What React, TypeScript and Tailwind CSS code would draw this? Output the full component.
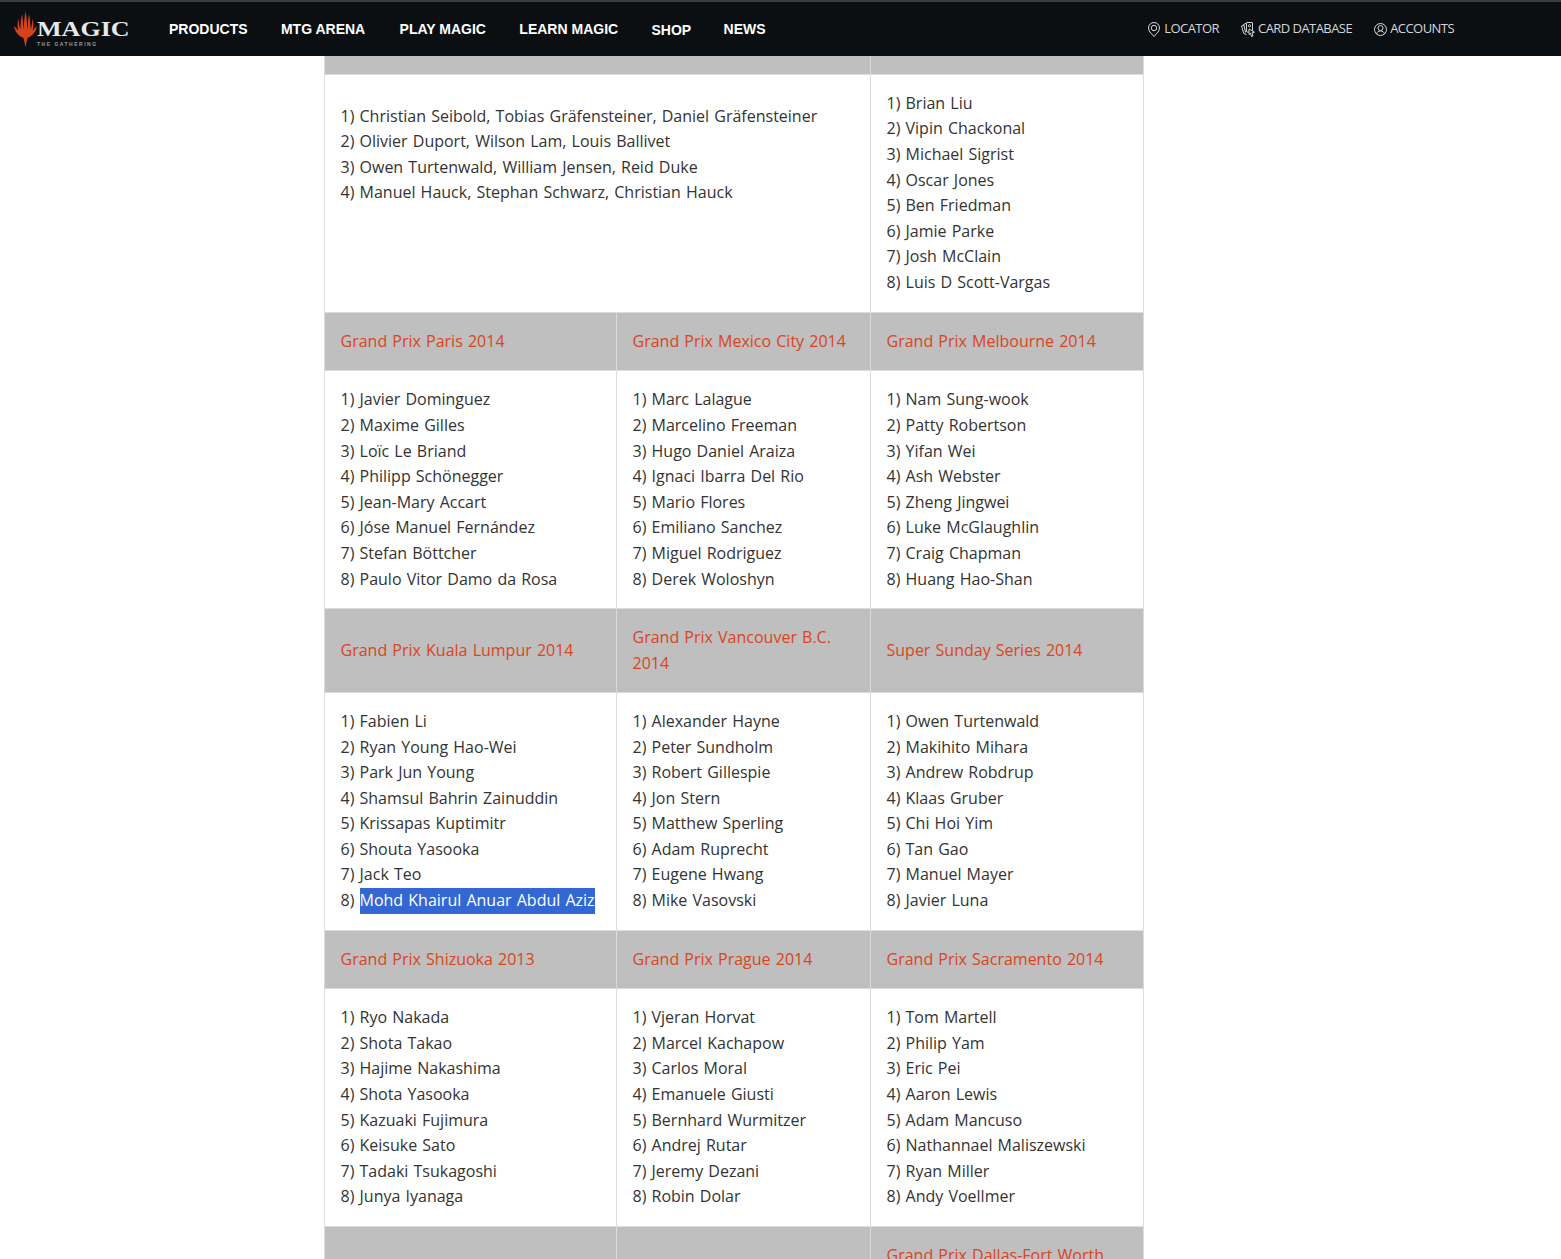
import React from 'react';

type Cell = { title?: string; lines: string[] };

const rows: Cell[][] = [
    [
        {
            title: 'Grand Prix Paris 2014',
            lines: ['Javier Dominguez', 'Maxime Gilles', 'Loïc Le Briand', 'Philipp Schönegger', 'Jean-Mary Accart', 'Jóse Manuel Fernández', 'Stefan Böttcher', 'Paulo Vitor Damo da Rosa'],
        },
        {
            title: 'Grand Prix Mexico City 2014',
            lines: ['Marc Lalague', 'Marcelino Freeman', 'Hugo Daniel Araiza', 'Ignaci Ibarra Del Rio', 'Mario Flores', 'Emiliano Sanchez', 'Miguel Rodriguez', 'Derek Woloshyn'],
        },
        {
            title: 'Grand Prix Melbourne 2014',
            lines: ['Nam Sung-wook', 'Patty Robertson', 'Yifan Wei', 'Ash Webster', 'Zheng Jingwei', 'Luke McGlaughlin', 'Craig Chapman', 'Huang Hao-Shan'],
        },
    ],
    [
        {
            title: 'Grand Prix Kuala Lumpur 2014',
            lines: ['Fabien Li', 'Ryan Young Hao-Wei', 'Park Jun Young', 'Shamsul Bahrin Zainuddin', 'Krissapas Kuptimitr', 'Shouta Yasooka', 'Jack Teo', 'Mohd Khairul Anuar Abdul Aziz'],
        },
        {
            title: 'Grand Prix Vancouver B.C. 2014',
            lines: ['Alexander Hayne', 'Peter Sundholm', 'Robert Gillespie', 'Jon Stern', 'Matthew Sperling', 'Adam Ruprecht', 'Eugene Hwang', 'Mike Vasovski'],
        },
        {
            title: 'Super Sunday Series 2014',
            lines: ['Owen Turtenwald', 'Makihito Mihara', 'Andrew Robdrup', 'Klaas Gruber', 'Chi Hoi Yim', 'Tan Gao', 'Manuel Mayer', 'Javier Luna'],
        },
    ],
    [
        {
            title: 'Grand Prix Shizuoka 2013',
            lines: ['Ryo Nakada', 'Shota Takao', 'Hajime Nakashima', 'Shota Yasooka', 'Kazuaki Fujimura', 'Keisuke Sato', 'Tadaki Tsukagoshi', 'Junya Iyanaga'],
        },
        {
            title: 'Grand Prix Prague 2014',
            lines: ['Vjeran Horvat', 'Marcel Kachapow', 'Carlos Moral', 'Emanuele Giusti', 'Bernhard Wurmitzer', 'Andrej Rutar', 'Jeremy Dezani', 'Robin Dolar'],
        },
        {
            title: 'Grand Prix Sacramento 2014',
            lines: ['Tom Martell', 'Philip Yam', 'Eric Pei', 'Aaron Lewis', 'Adam Mancuso', 'Nathannael Maliszewski', 'Ryan Miller', 'Andy Voellmer'],
        },
    ],
];

const thClass = 'border border-[#dcdcdc] bg-[#bfbfbf] pl-[15.5px] pr-[15px] pt-[15.9px] pb-[15.7px] text-left align-middle font-normal text-[#d9451e]';
const tdClass = 'border border-[#dcdcdc] bg-white pl-[15.5px] pr-[15px] pt-4 pb-4 align-top text-[#333333]';

function Lines({ items, selectLast }: { items: string[]; selectLast?: boolean }) {
    return (
        <>
            {items.map((name, i) => (
                <div key={name} className="whitespace-nowrap">
                    {i + 1}){' '}
                    {selectLast && i === items.length - 1 ? <span className="inline-block h-[26px] bg-[#3367d1] text-white">{name}</span> : name}
                </div>
            ))}
        </>
    );
}

function MagicLogo() {
    return (
        <div className="relative h-[40px] w-[116px] shrink-0">
            <svg viewBox="0 0 23 36" className="absolute left-0 top-[2px] h-[36px] w-[23px]">
                <path
                    fill="#d4431c"
                    d="M11.5 36 L9.6 27 C5.5 25.5 2 22 0.6 17.5 L0 15 L2.2 17 C2.8 18.2 3.4 19 4.2 19.5 C3.4 16 3.4 12 4.2 7.5 C4.9 11 5.2 15 6.2 18.6 C6.6 13.5 6.8 8 8.2 3 C8.9 8 8.9 13.5 9.6 18.4 C10 12.5 10.4 6 11.5 0 C12.6 6 13 12.5 13.4 18.4 C14.1 13.5 14.1 8 14.8 3 C16.2 8 16.4 13.5 16.8 18.6 C17.8 15 18.1 11 18.8 7.5 C19.6 12 19.6 16 18.8 19.5 C19.6 19 20.2 18.2 20.8 17 L23 15 L22.4 17.5 C21 22 17.5 25.5 13.4 27 Z"
                />
            </svg>
            <span className="absolute left-[23px] top-[10px] origin-left scale-x-[1.24] font-['Liberation_Serif',serif] text-[21px] leading-[21px] font-bold text-[#e6e8ea]">
                MAGIC
            </span>
            <span className="absolute left-[23px] top-[33px] font-['Liberation_Sans',sans-serif] text-[5px] leading-[5px] font-bold tracking-[1.5px] whitespace-nowrap text-[#9a9c9e]">
                THE GATHERING
            </span>
        </div>
    );
}

function PinIcon() {
    return (
        <svg viewBox="0 0 12 15" className="h-[15px] w-3" fill="none" stroke="#d5d7d9" strokeWidth="1">
            <path d="M6 14.5 C5 12.5 0.5 10.5 0.5 6 A5.5 5.5 0 0 1 11.5 6 C11.5 10.5 7 12.5 6 14.5 Z" />
            <circle cx="6" cy="6" r="2.7" />
        </svg>
    );
}

function CardsIcon() {
    return (
        <svg viewBox="0 0 14 15" className="h-[15px] w-[14px]" fill="none" stroke="#d5d7d9" strokeWidth="1">
            <path d="M3 3 L0.5 4 L2.8 11.5 L5.5 12.5" />
            <path d="M5 1.5 L2.8 2.3 L4.5 10.5" />
            <rect x="5.5" y="0.5" width="6" height="9.5" rx="0.5" />
            <circle cx="8.5" cy="3.8" r="1.1" />
            <path d="M8 7 L8 12.5 L9.5 11.2 L10.5 14.5 L12 14 L11 10.8 L13.5 10.2 Z" fill="#0b0f12" />
        </svg>
    );
}

function UserIcon() {
    return (
        <svg viewBox="0 0 13 13" className="h-[13px] w-[13px]" fill="none" stroke="#d5d7d9" strokeWidth="1">
            <circle cx="6.5" cy="6.5" r="6" />
            <circle cx="6.5" cy="5" r="2.5" />
            <path d="M2.5 11 C3 9 4.5 8 6.5 8 C8.5 8 10 9 10.5 11" />
        </svg>
    );
}

function NavBar() {
    return (
        <header className="flex h-[56px] items-center border-t-2 border-[#3a3d40] bg-[#0b0f12] pl-[14px]">
            <MagicLogo />
            <nav className="ml-[39px] flex gap-[33.4px] font-['Liberation_Sans',sans-serif] text-sm font-bold whitespace-nowrap text-white">
                <span>PRODUCTS</span>
                <span>MTG ARENA</span>
                <span className="translate-x-px">PLAY MAGIC</span>
                <span className="translate-x-px">LEARN MAGIC</span>
                <span className="translate-x-px translate-y-px">SHOP</span>
                <span>NEWS</span>
            </nav>
            <div className="ml-auto mr-[107px] flex items-center gap-[22px] text-[13px] tracking-[-0.55px] text-[#d5d7d9]">
                <span className="flex items-center gap-1">
                    <PinIcon />
                    LOCATOR
                </span>
                <span className="flex items-center gap-[3px]">
                    <CardsIcon />
                    CARD DATABASE
                </span>
                <span className="flex items-center gap-[3px]">
                    <UserIcon />
                    ACCOUNTS
                </span>
            </div>
        </header>
    );
}

export default function App() {
    return (
        <div className="h-[1259px] overflow-hidden bg-white font-['Open_Sans',sans-serif] text-base leading-[25.6px]">
            <NavBar />
            <table className="ml-[324px] w-[819px] table-fixed border-collapse [word-spacing:1px]">
                <colgroup>
                    <col className="w-[292px]" />
                    <col className="w-[254px]" />
                    <col className="w-[273px]" />
                </colgroup>
                <tbody>
                    <tr className="h-[18px]">
                        <th colSpan={2} className="border border-t-0 border-[#dcdcdc] bg-[#bfbfbf] p-0" />
                        <th className="border border-t-0 border-[#dcdcdc] bg-[#bfbfbf] p-0" />
                    </tr>
                    <tr>
                        <td colSpan={2} className={tdClass + ' !pt-[29px]'}>
                            <Lines
                                items={[
                                    'Christian Seibold, Tobias Gräfensteiner, Daniel Gräfensteiner',
                                    'Olivier Duport, Wilson Lam, Louis Ballivet',
                                    'Owen Turtenwald, William Jensen, Reid Duke',
                                    'Manuel Hauck, Stephan Schwarz, Christian Hauck',
                                ]}
                            />
                        </td>
                        <td className={tdClass + ' !pt-[16.4px] !pb-[16.6px]'}>
                            <Lines items={['Brian Liu', 'Vipin Chackonal', 'Michael Sigrist', 'Oscar Jones', 'Ben Friedman', 'Jamie Parke', 'Josh McClain', 'Luis D Scott-Vargas']} />
                        </td>
                    </tr>
                    {rows.map((row, r) => (
                        <React.Fragment key={r}>
                            <tr>
                                {row.map((cell) => (
                                    <th key={cell.title} className={thClass}>
                                        {cell.title}
                                    </th>
                                ))}
                            </tr>
                            <tr>
                                {row.map((cell, c) => (
                                    <td key={c} className={tdClass}>
                                        <Lines items={cell.lines} selectLast={r === 1 && c === 0} />
                                    </td>
                                ))}
                            </tr>
                        </React.Fragment>
                    ))}
                    <tr>
                        <th className={thClass} />
                        <th className={thClass} />
                        <th className={thClass}>Grand Prix Dallas-Fort Worth 2014</th>
                    </tr>
                </tbody>
            </table>
        </div>
    );
}
